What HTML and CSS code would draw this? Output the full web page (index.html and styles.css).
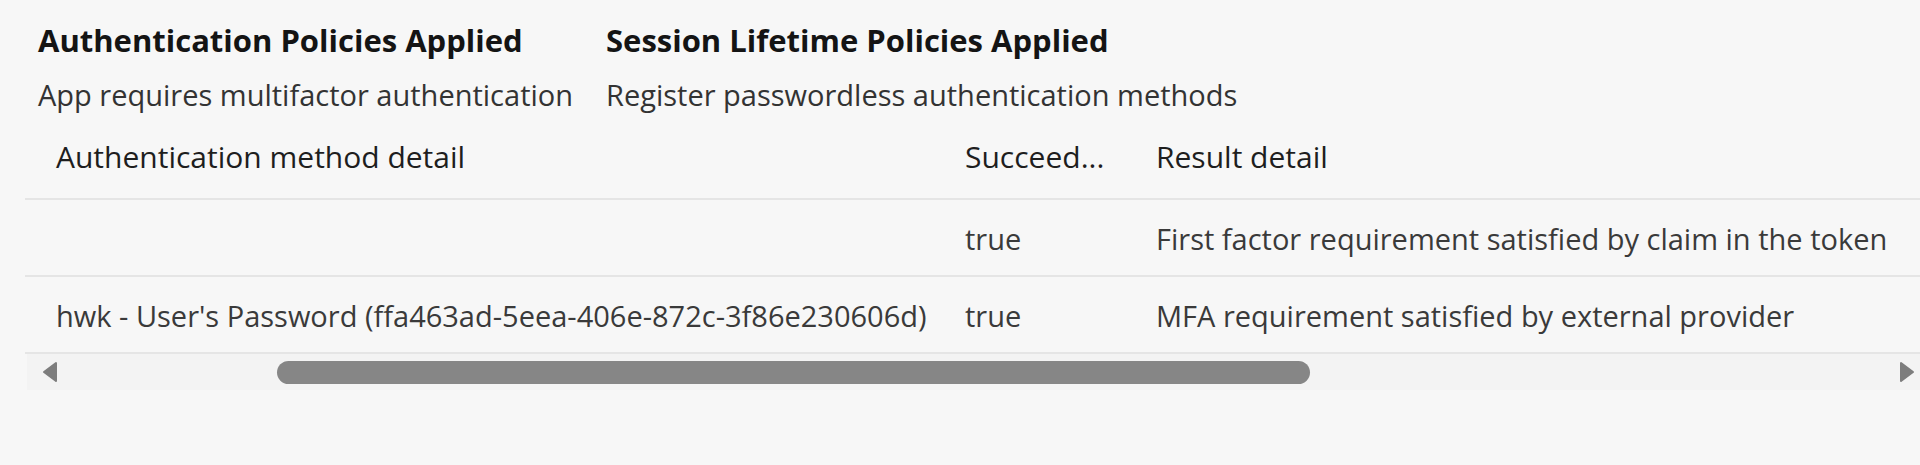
FILE: index.html
```html
<!DOCTYPE html>
<html lang="en">
<head>
<meta charset="utf-8">
<title>Sign-in details</title>
<link rel="stylesheet" href="styles.css">
</head>
<body>
<div class="page">
  <div class="policies">
    <div class="policy">
      <div class="policy-title">Authentication Policies Applied</div>
      <div class="policy-value">App requires multifactor authentication</div>
    </div>
    <div class="policy">
      <div class="policy-title">Session Lifetime Policies Applied</div>
      <div class="policy-value">Register passwordless authentication methods</div>
    </div>
  </div>

  <div class="grid">
    <div class="row head">
      <div class="cell first">Authentication method detail</div>
      <div class="cell">Succeed...</div>
      <div class="cell">Result detail</div>
    </div>
    <div class="row">
      <div class="cell first"></div>
      <div class="cell">true</div>
      <div class="cell">First factor requirement satisfied by claim in the token</div>
    </div>
    <div class="row">
      <div class="cell first">hwk - User's Password (ffa463ad-5eea-406e-872c-3f86e230606d)</div>
      <div class="cell">true</div>
      <div class="cell">MFA requirement satisfied by external provider</div>
    </div>
    <div class="hscroll">
      <svg class="arrow" width="16" height="22" viewBox="0 0 16 22"><polygon points="14,2 14,20 2,11" fill="#7d7d7d" stroke="#7d7d7d" stroke-width="2" stroke-linejoin="round"/></svg>
      <div class="track"><div class="thumb" style="margin-left:219px;width:1033px"></div></div>
      <svg class="arrow" width="16" height="22" viewBox="0 0 16 22"><polygon points="2,2 2,20 14,11" fill="#7d7d7d" stroke="#7d7d7d" stroke-width="2" stroke-linejoin="round"/></svg>
    </div>
  </div>
</div>
</body>
</html>
```
FILE: styles.css
```css
html, body {
  margin: 0;
  padding: 0;
  background: #f7f7f7;
}
body {
  font-family: "Open Sans", "Noto Sans", sans-serif;
  color: #222;
  width: 1920px;
  height: 465px;
  overflow: hidden;
}
.page {
  padding-top: 22px;
}
.policies {
  display: grid;
  grid-template-columns: 568px auto;
  padding-left: 38px;
}
.policy {
  display: flex;
  flex-direction: column;
  gap: 19px;
}
.policy-title {
  font-size: 31px;
  font-weight: 700;
  line-height: 36px;
  color: #141414;
  white-space: nowrap;
}
.policy-value {
  font-size: 29px;
  line-height: 36px;
  color: #333;
  white-space: nowrap;
}
.grid {
  margin-left: 25px;
}
.row {
  display: grid;
  grid-template-columns: 924px 191px 1fr;
  border-bottom: 2px solid #e5e5e5;
  font-size: 29px;
  line-height: 36px;
  padding: 21px 0 18px;
  color: #3a3a3a;
}
.row.head {
  font-size: 30px;
  padding: 26px 0 23px;
  color: #1e1e1e;
}
.cell {
  padding-left: 16px;
  white-space: nowrap;
}
.cell.first {
  padding-left: 31px;
}
.hscroll {
  display: flex;
  align-items: center;
  height: 36px;
  margin-left: 2px;
  padding-left: 15px;
  padding-right: 5px;
  background: #f3f3f3;
}
.arrow {
  flex: none;
  display: block;
}
.track {
  flex: 1;
  display: flex;
  align-items: center;
}
.thumb {
  height: 23px;
  border-radius: 12px;
  background: #868686;
}
```
